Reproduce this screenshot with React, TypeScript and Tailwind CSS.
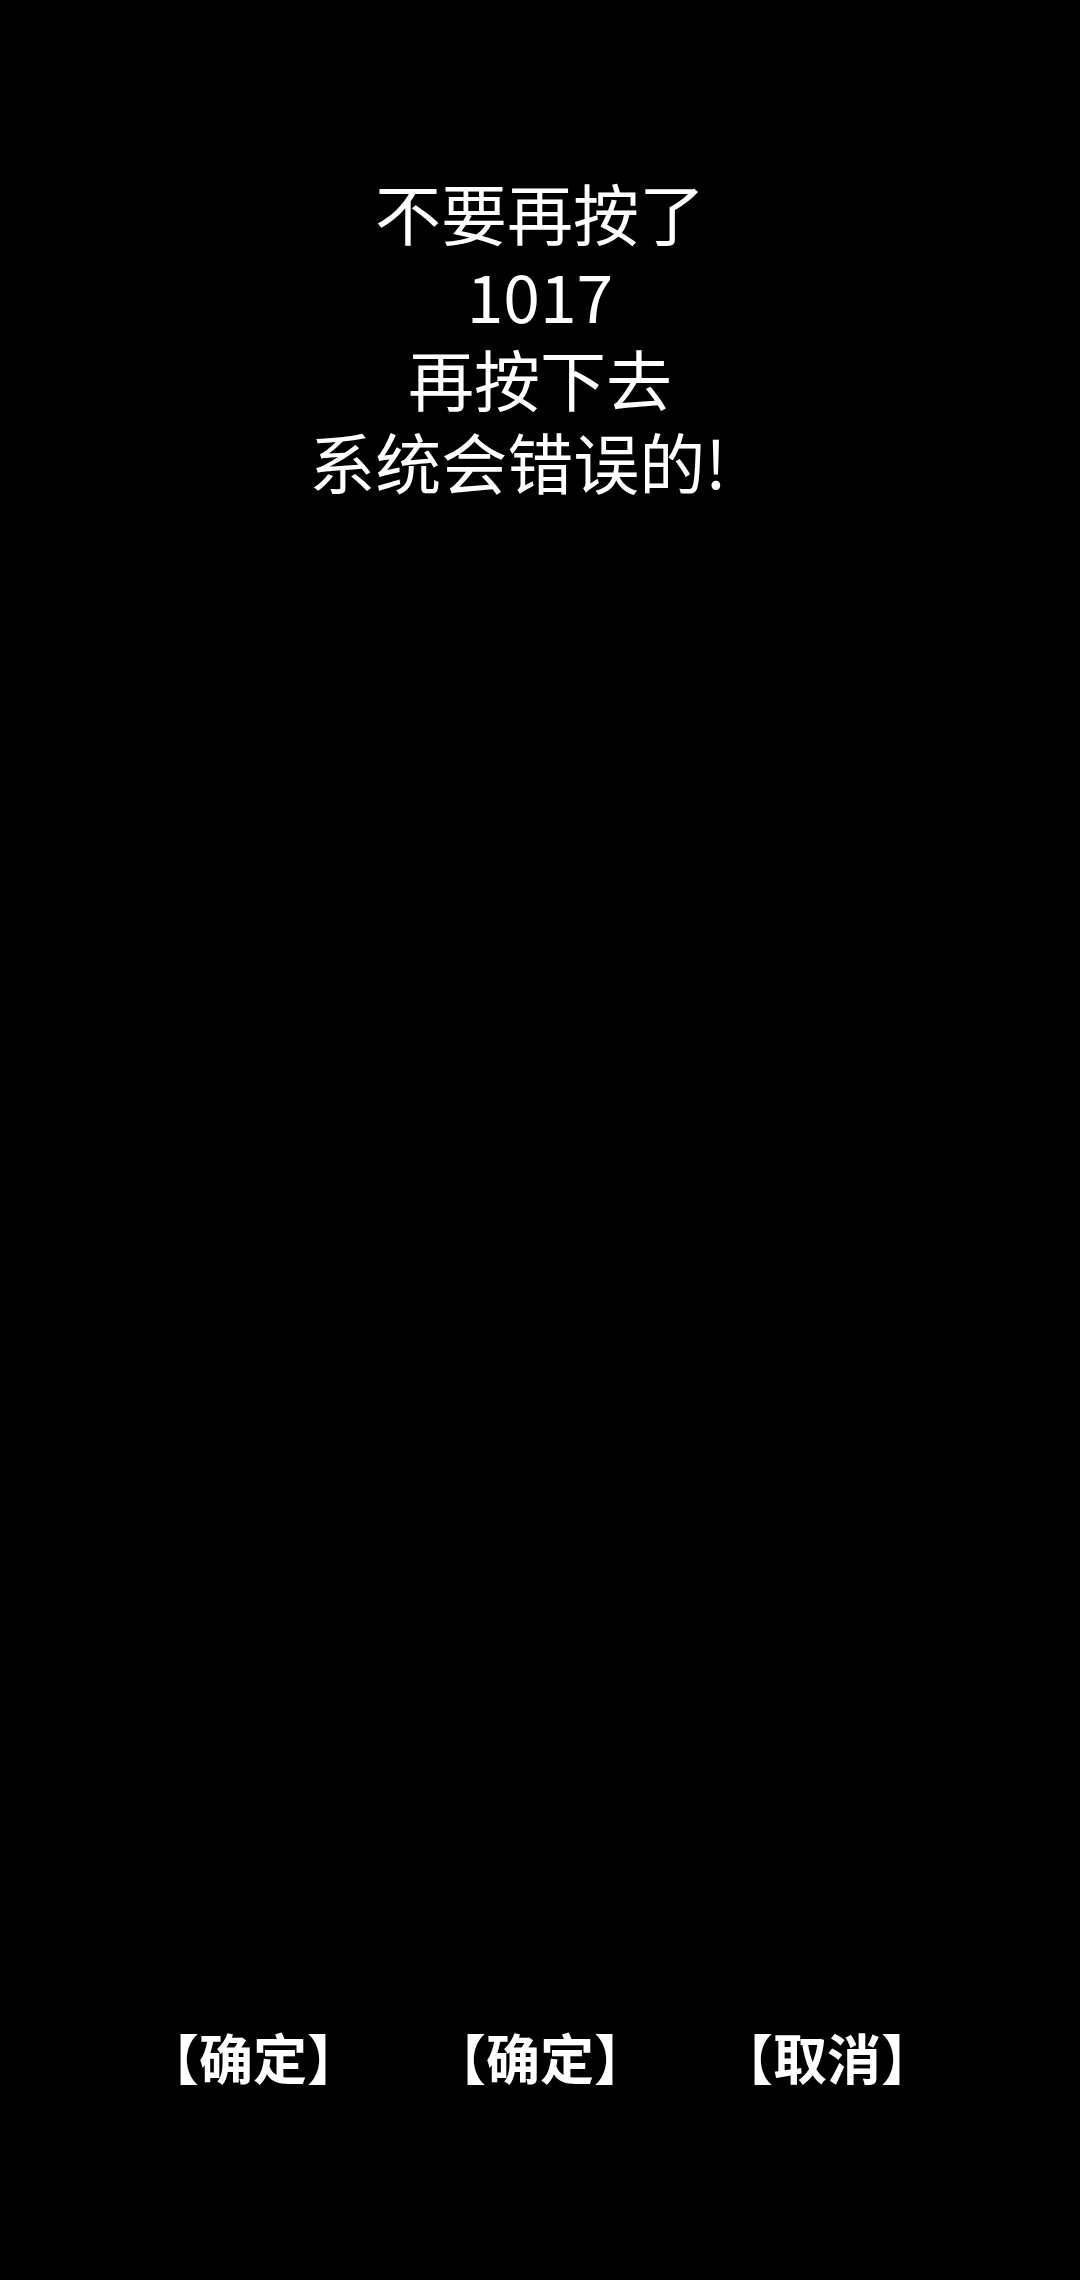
import React from 'react'

const buttons = ['【确定】', '【确定】', '【取消】']

export default function App() {
  return (
    <div
      className="flex h-[2280px] w-full flex-col bg-black text-white"
      style={{ fontFamily: '"Noto Sans CJK SC", "Noto Sans", sans-serif' }}
    >
      <div className="flex flex-col items-center pt-[170px] text-[66px] leading-[83px]">
        <div>不要再按了</div>
        <div>1017</div>
        <div>再按下去</div>
        <div className="pr-[44px]">系统会错误的!</div>
      </div>

      <div className="mx-auto mt-auto grid w-[861px] grid-cols-3 pb-[196px] text-[54px] font-bold leading-[54px] [font-feature-settings:'halt']">
        {buttons.map((b, i) => (
          <button key={i} className="text-center">
            {b}
          </button>
        ))}
      </div>
    </div>
  )
}
